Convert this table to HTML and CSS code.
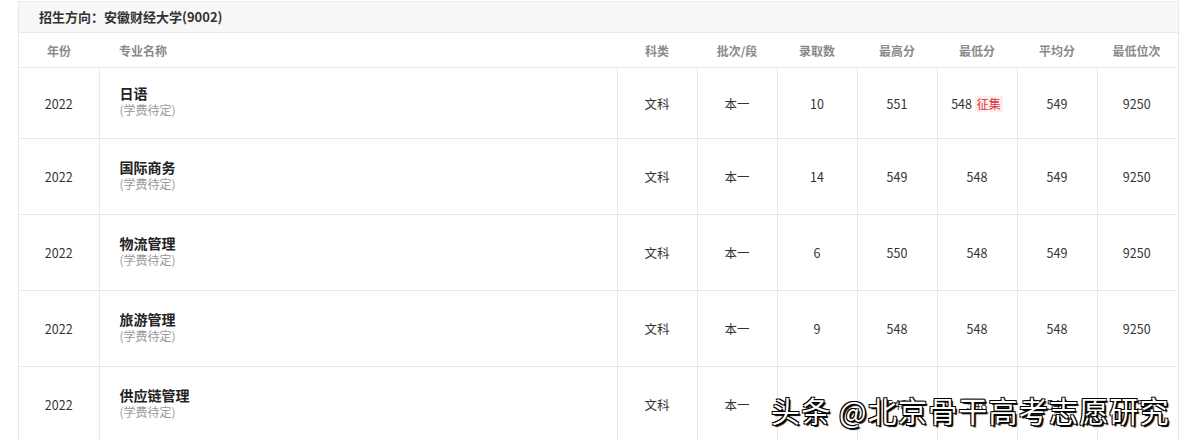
FILE: index.html
```html
<!DOCTYPE html>
<html lang="zh">
<head>
<meta charset="utf-8">
<link rel="stylesheet" href="styles.css">
</head>
<body>
<div class="wrap">
  <div class="title">招生方向：安徽财经大学(9002)</div>
  <table class="grid">
    <colgroup>
      <col class="c80"><col class="cname"><col class="c80"><col class="c80"><col class="c80"><col class="c80"><col class="c80"><col class="c80"><col class="c79">
    </colgroup>
    <thead>
      <tr>
        <th>年份</th><th class="left">专业名称</th><th>科类</th><th>批次/段</th><th>录取数</th><th>最高分</th><th>最低分</th><th>平均分</th><th>最低位次</th>
      </tr>
    </thead>
    <tbody>
      <tr class="first">
        <td>2022</td>
        <td class="left"><div class="major">日语</div><div class="fee">(学费待定)</div></td>
        <td>文科</td><td>本一</td><td>10</td><td>551</td><td>548 <span class="tag">征集</span></td><td>549</td><td>9250</td>
      </tr>
      <tr>
        <td>2022</td>
        <td class="left"><div class="major">国际商务</div><div class="fee">(学费待定)</div></td>
        <td>文科</td><td>本一</td><td>14</td><td>549</td><td>548</td><td>549</td><td>9250</td>
      </tr>
      <tr>
        <td>2022</td>
        <td class="left"><div class="major">物流管理</div><div class="fee">(学费待定)</div></td>
        <td>文科</td><td>本一</td><td>6</td><td>550</td><td>548</td><td>549</td><td>9250</td>
      </tr>
      <tr>
        <td>2022</td>
        <td class="left"><div class="major">旅游管理</div><div class="fee">(学费待定)</div></td>
        <td>文科</td><td>本一</td><td>9</td><td>548</td><td>548</td><td>548</td><td>9250</td>
      </tr>
      <tr>
        <td>2022</td>
        <td class="left"><div class="major">供应链管理</div><div class="fee">(学费待定)</div></td>
        <td>文科</td><td>本一</td><td>7</td><td>548</td><td>548</td><td>548</td><td>9250</td>
      </tr>
    </tbody>
  </table>
  <div class="watermark">头条 @北京骨干高考志愿研究</div>
</div>
</body>
</html>
```

FILE: styles.css
```css
html, body {
  margin: 0;
  padding: 0;
  background: #fff;
}
body {
  font-family: "Noto Sans CJK SC", "Noto Sans", sans-serif;
  color: #333;
  overflow: hidden;
}
.wrap {
  position: relative;
  margin: 1px 0 0 18px;
  width: 1159px;
  border-left: 1px solid #e8e8e8;
  border-right: 1px solid #e8e8e8;
  border-top: 1px solid #eeeeee;
}
.title {
  height: 30px;
  line-height: 30px;
  padding-left: 20px;
  background: #f8f8f8;
  border-bottom: 1px solid #e8e8e8;
  font-size: 13px;
  font-weight: 700;
  color: #333;
}
.grid {
  width: 1157px;
  table-layout: fixed;
  border-collapse: collapse;
}
.c80 { width: 80px; }
.c79 { width: 79px; }
.cname { width: 518px; }
.grid th {
  height: 34px;
  font-size: 12px;
  font-weight: 700;
  color: #8a8a8a;
  text-align: center;
  padding: 0;
  border-bottom: 1px solid #e8e8e8;
}
.grid td {
  height: 75px;
  font-size: 12.5px;
  color: #333;
  text-align: center;
  padding: 0;
  border-bottom: 1px solid #e8e8e8;
  border-left: 1px solid #e8e8e8;
}
.grid tr.first td {
  height: 70px;
}
.grid td:first-child {
  border-left: none;
}
.grid .left {
  text-align: left;
  padding-left: 20px;
}
.grid td.left {
  padding-bottom: 3px;
  box-sizing: border-box;
}
.major {
  font-size: 14px;
  font-weight: 700;
  color: #222;
  line-height: 17px;
}
.fee {
  font-size: 12px;
  color: #999;
  line-height: 16px;
}
.tag {
  display: inline-block;
  color: #e0303c;
  background: #fdeeee;
  font-size: 12px;
  line-height: 16px;
  padding: 0 2px;
}
.watermark {
  position: absolute;
  left: 752px;
  top: 391px;
  font-size: 29px;
  line-height: 34px;
  color: #fff;
  letter-spacing: 1.2px;
  white-space: nowrap;
  text-shadow: -1px -1px 0 #000, 1px -1px 0 #000, -1px 1px 0 #000, 1px 1px 0 #000, 2px 2px 1px #000;
}
```
